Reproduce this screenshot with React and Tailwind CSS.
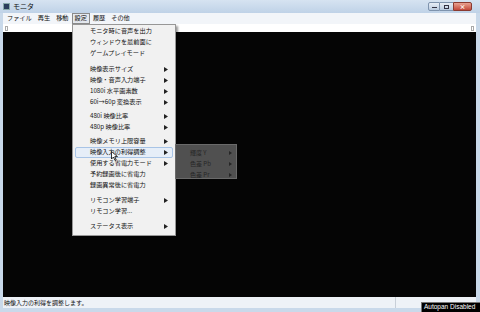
import React from "react";

const Arrow = () => (
  <svg width="4" height="5" viewBox="0 0 4 5" className="shrink-0">
    <path d="M0 0 L4 2.5 L0 5 Z" fill="#222" />
  </svg>
);

const Item = ({ label, sub, hl }) => (
  <div
    className={
      "flex items-center h-[11px] pl-[14px] pr-[4px] mx-[2px] " +
      (hl ? "bg-[#e6eef8] border border-[#a8c4e6] rounded-[2px]" : "border border-transparent")
    }
  >
    <span className="flex-1 whitespace-nowrap">{label}</span>
    {sub && <Arrow />}
  </div>
);

const Sep = ({ h }) => <div className={h} />;

export default function App() {
  return (
    <div
      className="w-[480px] h-[312px] flex flex-col bg-[#c9d9ea] relative overflow-hidden text-[#111]"
      style={{ fontFamily: '"Noto Sans CJK JP", "Noto Sans", sans-serif' }}
    >
      {/* title bar */}
      <div className="h-[13px] flex items-center bg-gradient-to-b from-[#d6e3f1] to-[#bfd2e7] px-[3px]">
        <div className="w-[7px] h-[7px] bg-[#2a3e5c] border border-[#8aa] mr-[3px]" />
        <span className="text-[7px] leading-none">モニタ</span>
        <div className="flex-1" />
        <div className="flex h-[9px] mr-[5px]">
          <div className="w-[12px] h-full border border-[#7e93ad] bg-gradient-to-b from-[#e8eef6] to-[#b9cbe0] rounded-l-[2px] flex items-end justify-center pb-[2px]">
            <div className="w-[5px] h-[1px] bg-[#334]" />
          </div>
          <div className="w-[13px] h-full border-y border-[#7e93ad] bg-gradient-to-b from-[#e8eef6] to-[#b9cbe0] flex items-center justify-center">
            <div className="w-[5px] h-[4px] border border-[#334]" />
          </div>
          <div className="w-[19px] h-full border border-[#8a3a30] bg-gradient-to-b from-[#e8a191] to-[#c2473a] rounded-r-[2px] flex items-center justify-center text-white text-[6px] leading-none font-bold">
            ×
          </div>
        </div>
      </div>

      {/* body */}
      <div className="flex-1 flex flex-col px-[3px] pr-[4px]">
        {/* menu bar */}
        <div className="h-[11px] flex items-center bg-[#f2f5f9] text-[6.2px] leading-none pl-[1px]">
          <span className="px-[3px]">ファイル</span>
          <span className="px-[3px]">再生</span>
          <span className="px-[3px]">移動</span>
          <span className="px-[2px] py-[1px] border border-[#8a8a8a] bg-[#e4e8ee]">設定</span>
          <span className="px-[3px]">履歴</span>
          <span className="px-[3px]">その他</span>
        </div>
        {/* thin strip */}
        <div className="h-[8px] bg-white flex items-center justify-between px-[2px]">
          <div className="w-[3px] h-[5px] border border-[#aaa]" />
          <div className="w-[3px] h-[5px] border border-[#aaa]" />
        </div>
        {/* video */}
        <div className="flex-1 bg-[#050505]" />
        {/* status bar */}
        <div className="h-[11px] bg-[#eef2f7] flex items-center text-[6px] leading-none">
          <span className="pl-[1px] w-[392px]">映像入力の利得を調整します。</span>
          <div className="w-[1px] h-full bg-[#c8cfd8]" />
        </div>
      </div>
      <div className="h-[4px]" />

      {/* dropdown menu */}
      <div className="absolute left-[72px] top-[24px] w-[104px] h-[212px] bg-[#f1f1f1] border border-[#979797] shadow-[2px_2px_2px_rgba(0,0,0,0.4)] text-[6.2px] leading-none pt-[1px]">
        <Item label="モニタ時に音声を出力" />
        <Item label="ウィンドウを最前面に" />
        <Item label="ゲームプレイモード" />
        <Sep h="h-[5px]" />
        <Item label="映像表示サイズ" sub />
        <Item label="映像・音声入力端子" sub />
        <Item label="1080i 水平画素数" sub />
        <Item label="60i→60p 変換表示" sub />
        <Sep h="h-[3px]" />
        <Item label="480i 映像比率" sub />
        <Item label="480p 映像比率" sub />
        <Sep h="h-[3px]" />
        <Item label="映像メモリ上限容量" sub />
        <Item label="映像入力の利得調整" sub hl />
        <Item label="使用する省電力モード" sub />
        <Item label="予約録画後に省電力" />
        <Item label="録画異常後に省電力" />
        <Sep h="h-[4px]" />
        <Item label="リモコン学習端子" sub />
        <Item label="リモコン学習..." />
        <Sep h="h-[4px]" />
        <Item label="ステータス表示" sub />
      </div>

      {/* cursor */}
      <svg className="absolute left-[111px] top-[151px]" width="7" height="10" viewBox="0 0 7 10">
        <path d="M0.5 0.5 L0.5 8 L2.5 6 L4 9.5 L5.2 9 L3.8 5.6 L6.5 5.6 Z" fill="#fff" stroke="#000" strokeWidth="0.8" />
      </svg>

      {/* fading submenu */}
      <div className="absolute left-[175px] top-[144px] w-[62px] h-[35px] bg-[#505050] border border-[#6a6a6a] text-[6px] leading-none text-[#262626] pt-[2px]">
        <div className="flex items-center h-[11px] pl-[14px] pr-[4px]">
          <span className="flex-1">輝度 Y</span>
          <svg width="3" height="4" viewBox="0 0 3 4"><path d="M0 0 L3 2 L0 4Z" fill="#262626" /></svg>
        </div>
        <div className="flex items-center h-[11px] pl-[14px] pr-[4px]">
          <span className="flex-1">色差 Pb</span>
          <svg width="3" height="4" viewBox="0 0 3 4"><path d="M0 0 L3 2 L0 4Z" fill="#262626" /></svg>
        </div>
        <div className="flex items-center h-[11px] pl-[14px] pr-[4px]">
          <span className="flex-1">色差 Pr</span>
          <svg width="3" height="4" viewBox="0 0 3 4"><path d="M0 0 L3 2 L0 4Z" fill="#262626" /></svg>
        </div>
      </div>

      {/* tooltip */}
      <div className="absolute left-[421px] top-[302px] w-[59px] h-[10px] bg-black border-l border-t border-[#777] text-white text-[6.5px] leading-none flex items-center pl-[2px] whitespace-nowrap"
        style={{ fontFamily: '"Liberation Sans", sans-serif' }}>
        Autopan Disabled
      </div>
    </div>
  );
}
